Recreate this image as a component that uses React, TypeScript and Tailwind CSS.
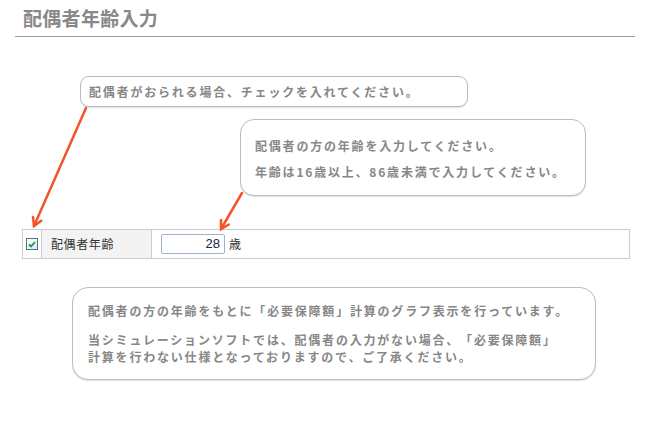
import React from 'react';

const Bubble: React.FC<{ className: string; children: React.ReactNode }> = ({ className, children }) => (
    <div
        className={`border border-[#bdbdbd] bg-white shadow-[0_1px_1px_rgba(0,0,0,0.12)] text-[12px] font-bold tracking-[1.8px] text-[#878787] [text-spacing-trim:space-all] ${className}`}
    >
        {children}
    </div>
);

const App: React.FC = () => {
    return (
        <div className="relative w-[650px] h-[430px] bg-white overflow-hidden font-['Noto_Sans_CJK_JP','Noto_Sans',sans-serif]">
            {/* Title */}
            <div className="mx-[15px] h-[37px] border-b border-[#999999] pl-[8px] pt-[6px]">
                <h1 className="text-[19px] leading-[24px] font-bold tracking-[0.3px] text-[#888888]">配偶者年齢入力</h1>
            </div>

            {/* Callout: checkbox */}
            <Bubble className="mt-[39px] ml-[80px] w-[388px] h-[31px] rounded-[9px] flex items-center pl-[8px]">
                配偶者がおられる場合、チェックを入れてください。
            </Bubble>

            {/* Callout: age */}
            <Bubble className="mt-[12px] ml-[240px] w-[346px] h-[77px] rounded-[14px] pl-[14px] pt-[13px] leading-[26px]">
                <p>配偶者の方の年齢を入力してください。</p>
                <p>年齢は16歳以上、86歳未満で入力してください。</p>
            </Bubble>

            {/* Input row */}
            <div className="mt-[33px] ml-[22px] w-[608px] h-[30px] border border-[#cccccc] flex">
                <div className="w-[19px] border-r border-[#cccccc] flex items-center justify-center">
                    <div className="w-[12px] h-[12px] border border-[#4d7199] bg-gradient-to-br from-white to-[#dbe6f2] flex items-center justify-center">
                        <svg width="8" height="7" viewBox="0 0 8 7">
                            <path d="M1 3.5 L3 5.5 L7 1" fill="none" stroke="#1f9a1f" strokeWidth="1.8" />
                        </svg>
                    </div>
                </div>
                <div className="w-[110px] bg-[#f3f3f3] border-r border-[#cccccc] flex items-center pl-[9px] text-[12px] tracking-[0.6px] text-[#333333]">
                    配偶者年齢
                </div>
                <div className="flex items-center pl-[9px] gap-[4px]">
                    <div className="w-[64px] h-[20px] border border-[#9fb4cc] rounded-[2px] flex items-center justify-end pr-[4px] font-['Liberation_Sans',sans-serif] text-[13px] text-[#22224a]">
                        28
                    </div>
                    <span className="text-[12px] text-[#333333]">歳</span>
                </div>
            </div>

            {/* Callout: note */}
            <Bubble className="mt-[28px] ml-[72px] w-[524px] h-[93px] rounded-[16px] pl-[15px] pt-[13px]">
                <p className="leading-[20px]">配偶者の方の年齢をもとに「必要保障額」計算のグラフ表示を行っています。</p>
                <p className="mt-[10px] leading-[17px]">
                    当シミュレーションソフトでは、配偶者の入力がない場合、「必要保障額」
                    <br />
                    計算を行わない仕様となっておりますので、ご了承ください。
                </p>
            </Bubble>

            {/* Arrows */}
            <svg className="absolute inset-0 pointer-events-none" width="650" height="430">
                <g stroke="#f4532b" strokeWidth="2.5" strokeLinecap="round" fill="none">
                    <line x1="86" y1="108" x2="34" y2="226" />
                    <polyline points="33,217 34,226 41.3,220.7" />
                    <line x1="242" y1="193" x2="221" y2="229" />
                    <polyline points="221,220 221,229 228.8,224.5" />
                </g>
            </svg>
        </div>
    );
};

export default App;
